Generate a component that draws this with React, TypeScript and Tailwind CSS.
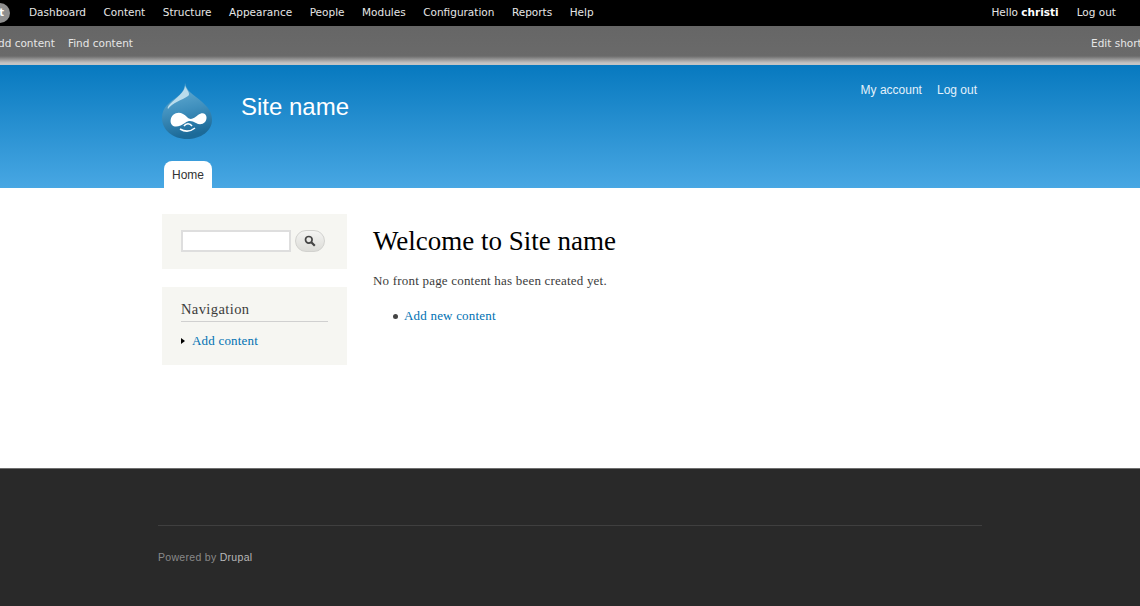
import React from "react";

const adminLinks = ["Dashboard", "Content", "Structure", "Appearance", "People", "Modules", "Configuration", "Reports", "Help"];

function DrupalLogo() {
  return (
    <svg width="52" height="58" viewBox="0 0 52 58">
      <defs>
        <linearGradient id="drop" x1="0" y1="0" x2="0.2" y2="1">
          <stop offset="0" stopColor="#6fb5d8" />
          <stop offset="0.55" stopColor="#3f8fbd" />
          <stop offset="1" stopColor="#1c6a98" />
        </linearGradient>
      </defs>
      <path d="M24 1 C25 9 33 13 40 19 C47 25 51 30 51 38 C51 49 40 57 26 57 C12 57 1 48 1 36 C1 25 9 20 16 15 C20 12 24 8 24 1 Z" fill="url(#drop)" />
      <path d="M24 4 C24 10 15 16 9 22 C7 24 6 26 7 27 C11 21 21 18 27 14 C30 12 26 8 24 4 Z" fill="#b9dcec" />
      <path d="M12 33 C17 29 22 31 26 35 C30 39 33 36 37 33 C41 30 45 31 45.500 35 C46 41 40 44 35 41 C31 39 28 38 24 41 C20 44 14 46 11 43 C9 41 9 36 12 33 Z" fill="#ffffff" />
      <path d="M19 47 C24 50 29 50 34 46" fill="none" stroke="#ffffff" strokeWidth="1.500" />
      <path d="M23 44 C25 41 29 41 31 44" fill="none" stroke="#ffffff" strokeWidth="1.500" />
    </svg>
  );
}

function SearchIcon() {
  return (
    <svg width="12" height="12" viewBox="0 0 12 12" fill="none" stroke="#444444">
      <circle cx="4.800" cy="4.800" r="3.300" strokeWidth="1.700" />
      <path d="M7.300 7.300 L10.800 10.800" strokeWidth="2.200" />
    </svg>
  );
}

export default function App() {
  return (
    <div className="w-[1140px] h-[606px] overflow-hidden flex flex-col bg-white">
      <div className="h-[26px] bg-black flex items-center justify-between shrink-0 font-['DejaVu_Sans',sans-serif] text-[10.500px] text-[#e6e6e6]">
        <div className="flex items-center">
          <div className="w-[20px] h-[20px] rounded-full bg-[#8f8f8f] -ml-[10px] mr-[19px] flex items-center justify-end pr-[6px] text-white font-bold">
            <span className="text-[10px] leading-none">t</span>
          </div>
          <div className="flex gap-[17.500px]">
            {adminLinks.map((l) => (
              <span key={l}>{l}</span>
            ))}
          </div>
        </div>
        <div className="flex gap-[18px] mr-[24px]">
          <span>
            Hello <b className="text-white">christi</b>
          </span>
          <span>Log out</span>
        </div>
      </div>

      <div className="h-[39px] shrink-0 bg-[linear-gradient(#666666_0,#6a6a6a_30px,#c4c4c4_37px,#c4c4c4_39px)] flex justify-between pt-[10px] font-['DejaVu_Sans',sans-serif] text-[10.500px] text-[#e6e6e6] whitespace-nowrap">
        <div className="flex gap-[13px] -ml-[9px]">
          <span>Add content</span>
          <span>Find content</span>
        </div>
        <span className="w-[49px] overflow-hidden">Edit shortcuts</span>
      </div>

      <header className="h-[123px] shrink-0 bg-[linear-gradient(#0779bf,#48a7e3)] flex flex-col items-center font-['Liberation_Sans',sans-serif]">
        <div className="w-[824px] relative flex-1 flex flex-col pl-[3px]">
          <div className="flex items-start pt-[17px] h-[96px]">
            <DrupalLogo />
            <span className="text-[24px] leading-[28px] text-white ml-[28px] mt-[11px]">Site name</span>
            <div className="ml-auto flex gap-[15px] text-[12px] text-[#e4f1fb] mr-[5px] -mt-[1px]">
              <span>My account</span>
              <span>Log out</span>
            </div>
          </div>
          <div className="ml-[3px] w-[48px] h-[27px] bg-white rounded-t-[8px] flex items-center justify-center text-[12px] text-[#333333]">
            Home
          </div>
        </div>
      </header>

      <main className="h-[280px] shrink-0 flex justify-center font-['Liberation_Serif',serif]">
        <div className="w-[824px] flex pl-[4px] pt-[26px]">
          <aside className="w-[185px] shrink-0 flex flex-col gap-[18px]">
            <div className="h-[55px] bg-[#f6f6f2] flex items-center pl-[19px] gap-[4px]">
              <div className="w-[110px] h-[22px] bg-white border-2 border-[#dedede] -mt-[1px]" />
              <div className="w-[30px] h-[22px] rounded-full bg-[linear-gradient(#f4f4f2,#dcdcd8)] border border-[#d2d2cf] flex items-center justify-center -mt-[1px]">
                <SearchIcon />
              </div>
            </div>
            <div className="h-[78px] bg-[#f6f6f2] px-[19px] pt-[13px]">
              <div className="text-[14.500px] leading-[18px] text-[#3b3b3b] pb-[3px] border-b border-[#d0d0d0] tracking-[0.4px]">Navigation</div>
              <div className="flex items-center mt-[9px] h-[20px]">
                <span className="w-0 h-0 border-y-[3.500px] border-y-transparent border-l-[4px] border-l-black" />
                <span className="ml-[7px] text-[13px] text-[#0071b3] tracking-[0.2px]">Add content</span>
              </div>
            </div>
          </aside>
          <section className="ml-[26px] pt-[11px] text-[#3b3b3b]">
            <h1 className="text-[27px] leading-[32px] text-black">Welcome to Site name</h1>
            <p className="text-[13px] leading-[18px] mt-[15px] tracking-[0.2px]">No front page content has been created yet.</p>
            <ul className="mt-[17px] pl-[20px] flex items-center text-[13px] leading-[18px]">
              <li className="flex items-center">
                <span className="w-[5px] h-[5px] rounded-full bg-[#444444] mr-[6px]" />
                <span className="text-[#0071b3] tracking-[0.2px]">Add new content</span>
              </li>
            </ul>
          </section>
        </div>
      </main>

      <footer className="flex-1 bg-[#292929] border-t border-[#6e6e6e] flex justify-center font-['Liberation_Sans',sans-serif]">
        <div className="w-[824px] mt-[56px]">
          <div className="border-t border-[#3f3f3f] pt-[24px] text-[10.500px] leading-[14px] text-[#8a8a8a] tracking-[0.3px]">
            Powered by <span className="text-[#b8b8b8]">Drupal</span>
          </div>
        </div>
      </footer>
    </div>
  );
}
